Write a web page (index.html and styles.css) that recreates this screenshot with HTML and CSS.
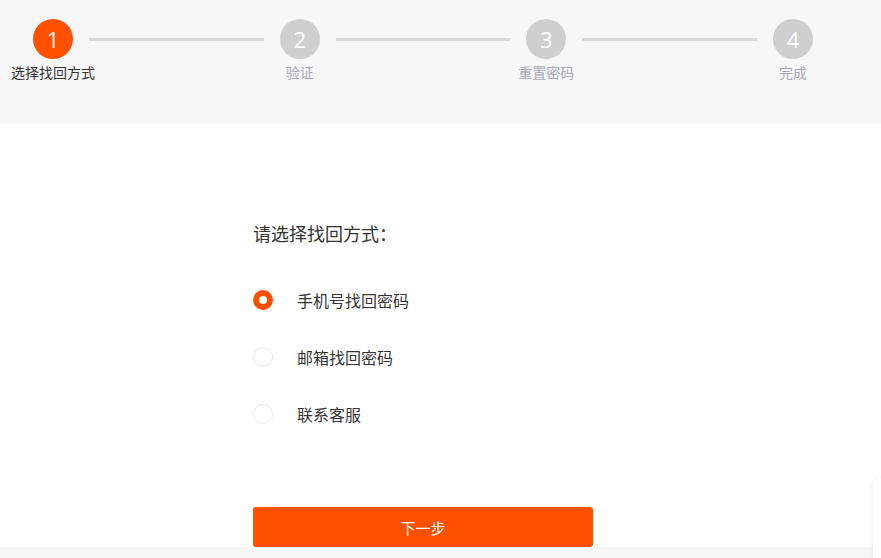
FILE: index.html
```html
<!DOCTYPE html>
<html lang="zh-CN">
<head>
<meta charset="utf-8">
<title>找回密码</title>
<link rel="stylesheet" href="styles.css">
</head>
<body>
<div class="page">
  <div class="steps">
    <div class="step active">
      <div class="num">1</div>
      <div class="label">选择找回方式</div>
    </div>
    <div class="line"></div>
    <div class="step">
      <div class="num">2</div>
      <div class="label">验证</div>
    </div>
    <div class="line"></div>
    <div class="step">
      <div class="num">3</div>
      <div class="label">重置密码</div>
    </div>
    <div class="line"></div>
    <div class="step">
      <div class="num">4</div>
      <div class="label">完成</div>
    </div>
  </div>
  <div class="panel">
    <div class="form">
      <div class="title">请选择找回方式：</div>
      <div class="options">
        <div class="option checked"><span class="radio"></span><span class="text">手机号找回密码</span></div>
        <div class="option"><span class="radio"></span><span class="text">邮箱找回密码</span></div>
        <div class="option"><span class="radio"></span><span class="text">联系客服</span></div>
      </div>
      <button class="next">下一步</button>
    </div>
  </div>
  <div class="side-float"></div>
</div>
</body>
</html>
```
FILE: styles.css
```css
html, body {
  margin: 0;
  padding: 0;
  background: #f7f7f7;
  font-family: "Noto Sans CJK SC", "Open Sans", "Liberation Sans", sans-serif;
  overflow: hidden;
}
.page {
  width: 881px;
  height: 558px;
  position: relative;
  overflow: hidden;
}
.steps {
  height: 123px;
  box-sizing: border-box;
  padding: 19px 68px 0 33px;
  display: flex;
  align-items: flex-start;
  background: #f7f7f7;
}
.step {
  width: 40px;
  display: flex;
  flex-direction: column;
  align-items: center;
  flex: none;
}
.num {
  width: 40px;
  height: 40px;
  border-radius: 50%;
  background: #cfcfcf;
  color: #fff;
  font-family: "Open Sans", "Liberation Sans", sans-serif;
  font-size: 22px;
  line-height: 40px;
  text-align: center;
}
.step.active .num {
  background: #ff5000;
}
.label {
  margin-top: 3px;
  white-space: nowrap;
  font-size: 14px;
  line-height: 20px;
  color: #a8a8b3;
}
.step.active .label {
  color: #333;
}
.line {
  flex: 1;
  height: 3px;
  margin: 19px 16px 0;
  background: #d9d9d9;
}
.panel {
  background: #fff;
  height: 424px;
  padding-left: 253px;
  box-sizing: border-box;
}
.form {
  padding-top: 97px;
  width: 340px;
}
.title {
  font-size: 18px;
  line-height: 26px;
  color: #333;
}
.options {
  margin-top: 44px;
  display: flex;
  flex-direction: column;
  gap: 37px;
}
.option {
  display: flex;
  align-items: center;
  height: 20px;
}
.radio {
  width: 20px;
  height: 20px;
  box-sizing: border-box;
  border-radius: 50%;
  border: 1px solid #eaeaea;
  background: #fff;
  flex: none;
}
.option.checked .radio {
  border: 6.5px solid #ff5000;
}
.text {
  margin-left: 24px;
  font-size: 16px;
  color: #333;
}
.next {
  display: block;
  margin-top: 83px;
  width: 340px;
  height: 40px;
  border: none;
  border-radius: 3px;
  background: #ff5000;
  color: #fff;
  font-family: "Noto Sans CJK SC", sans-serif;
  font-size: 15px;
  padding: 0;
}
.side-float {
  position: absolute;
  left: 873px;
  top: 478px;
  width: 30px;
  height: 100px;
  background: #fff;
  border-radius: 8px;
  box-shadow: 0 0 6px rgba(0,0,0,0.08);
}
```
